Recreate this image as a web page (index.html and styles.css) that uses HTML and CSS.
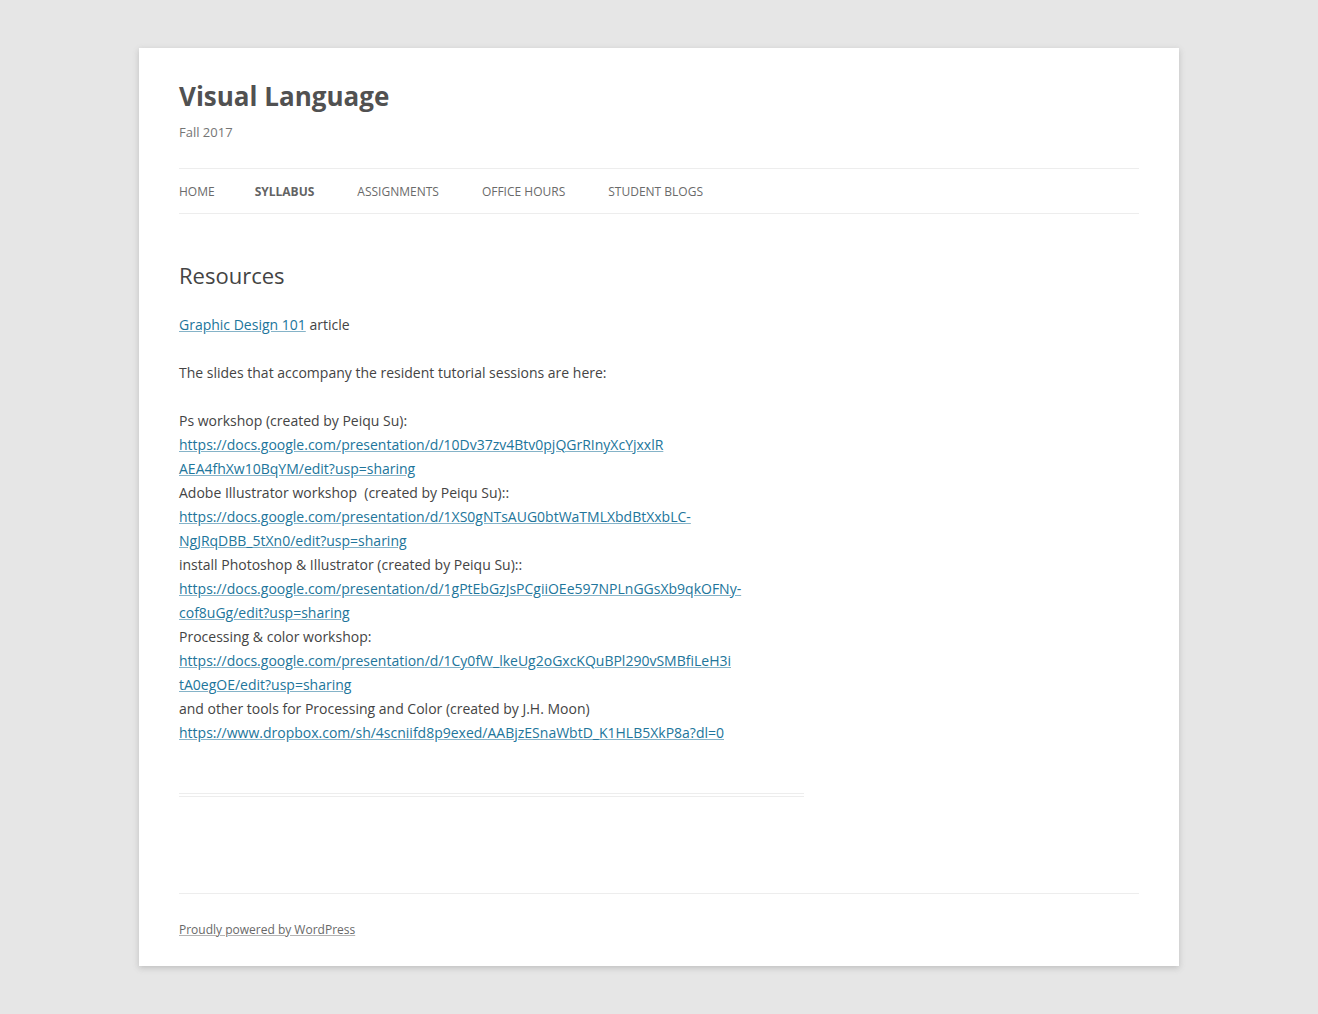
FILE: index.html
```
<!DOCTYPE html>
<html lang="en">
<head>
<meta charset="utf-8">
<title>Resources | Visual Language</title>
<link rel="stylesheet" href="styles.css">
</head>
<body>
<div class="site">
  <header class="site-header">
    <h1 class="site-title"><a href="#">Visual Language</a></h1>
    <h2 class="site-description">Fall 2017</h2>
    <nav class="main-navigation">
      <ul class="nav-menu">
        <li><a href="#">Home</a></li>
        <li class="current"><a href="#">Syllabus</a></li>
        <li><a href="#">Assignments</a></li>
        <li><a href="#">Office Hours</a></li>
        <li><a href="#">Student Blogs</a></li>
      </ul>
    </nav>
  </header>
  <main class="site-content">
    <article class="page-article">
      <header class="entry-header">
        <h1 class="entry-title">Resources</h1>
      </header>
      <div class="entry-content">
        <p><a href="#">Graphic Design 101</a> article</p>
        <p>The slides that accompany the resident tutorial sessions are here:</p>
        <p>Ps workshop (created by Peiqu Su):<br>
<a href="#">https://docs.google.com/presentation/d/10Dv37zv4Btv0pjQGrRInyXcYjxxlR<br>AEA4fhXw10BqYM/edit?usp=sharing</a><br>
Adobe Illustrator workshop&nbsp; (created by Peiqu Su)::<br>
<a href="#">https://docs.google.com/presentation/d/1XS0gNTsAUG0btWaTMLXbdBtXxbLC-<br>NgJRqDBB_5tXn0/edit?usp=sharing</a><br>
install Photoshop &amp; Illustrator (created by Peiqu Su)::<br>
<a href="#">https://docs.google.com/presentation/d/1gPtEbGzJsPCgiiOEe597NPLnGGsXb9qkOFNy-<br>cof8uGg/edit?usp=sharing</a><br>
Processing &amp; color workshop:<br>
<a href="#">https://docs.google.com/presentation/d/1Cy0fW_lkeUg2oGxcKQuBPl290vSMBfiLeH3i<br>tA0egOE/edit?usp=sharing</a><br>
and other tools for Processing and Color (created by J.H. Moon)<br>
<a href="#">https://www.dropbox.com/sh/4scniifd8p9exed/AABjzESnaWbtD_K1HLB5XkP8a?dl=0</a></p>
      </div>
    </article>
  </main>
  <footer class="site-footer">
    <div class="site-info"><a href="#">Proudly powered by WordPress</a></div>
  </footer>
</div>
</body>
</html>
```
FILE: styles.css
```
html, body {
  margin: 0;
  padding: 0;
}
body {
  background: #e6e6e6;
  font-family: "Open Sans", "Liberation Sans", sans-serif;
  font-size: 14px;
  line-height: 1.714285714;
  color: #444;
}
h1, h2, p, ul {
  margin: 0;
  padding: 0;
}
.site {
  max-width: 960px;
  margin: 48px auto;
  padding: 0 40px;
  background: #fff;
  box-shadow: 0 2px 6px rgba(100, 100, 100, 0.3);
  overflow: hidden;
}
.site-header {
  padding: 24px 0;
}
.site-title {
  font-size: 26px;
  line-height: 1.846153846;
  font-weight: bold;
}
.site-title a {
  color: #515151;
  text-decoration: none;
  display: inline-block;
}
.site-description {
  font-size: 13px;
  line-height: 1.846153846;
  font-weight: normal;
  color: #757575;
}
.main-navigation {
  margin-top: 24px;
}
.nav-menu {
  list-style: none;
  display: flex;
  border-top: 1px solid #ededed;
  border-bottom: 1px solid #ededed;
}
.nav-menu li {
  margin: 0 43px 0 0;
  font-size: 12px;
  line-height: 1.42857143;
}
.nav-menu li:first-child {
  margin-right: 40px;
}
.nav-menu li a {
  display: block;
  padding-top: 2px;
  color: #6a6a6a;
  text-decoration: none;
  line-height: 42.3px;
  text-transform: uppercase;
  white-space: nowrap;
}
.nav-menu li.current a {
  color: #636363;
  font-weight: bold;
}
.site-content {
  display: flow-root;
  width: 65.104166667%;
  margin-top: 24px;
}
.page-article {
  margin-bottom: 72px;
  padding-bottom: 24px;
  border-bottom: 4px double #ededed;
}
.entry-header {
  margin-bottom: 24px;
}
.entry-title {
  font-size: 22px;
  line-height: 1.2;
  font-weight: normal;
  color: #444;
}
.entry-content p {
  margin: 0 0 24px;
}
.entry-content a {
  color: #21759b;
  text-decoration: underline;
  text-decoration-color: rgba(33, 117, 155, 0.55);
}
.site-footer {
  border-top: 1px solid #ededed;
  margin-top: 24px;
  font-size: 12px;
  line-height: 2;
  padding: 24px 0;
}
.site-info a {
  color: #686868;
  text-decoration: underline;
  text-decoration-color: rgba(104, 104, 104, 0.5);
}
```
